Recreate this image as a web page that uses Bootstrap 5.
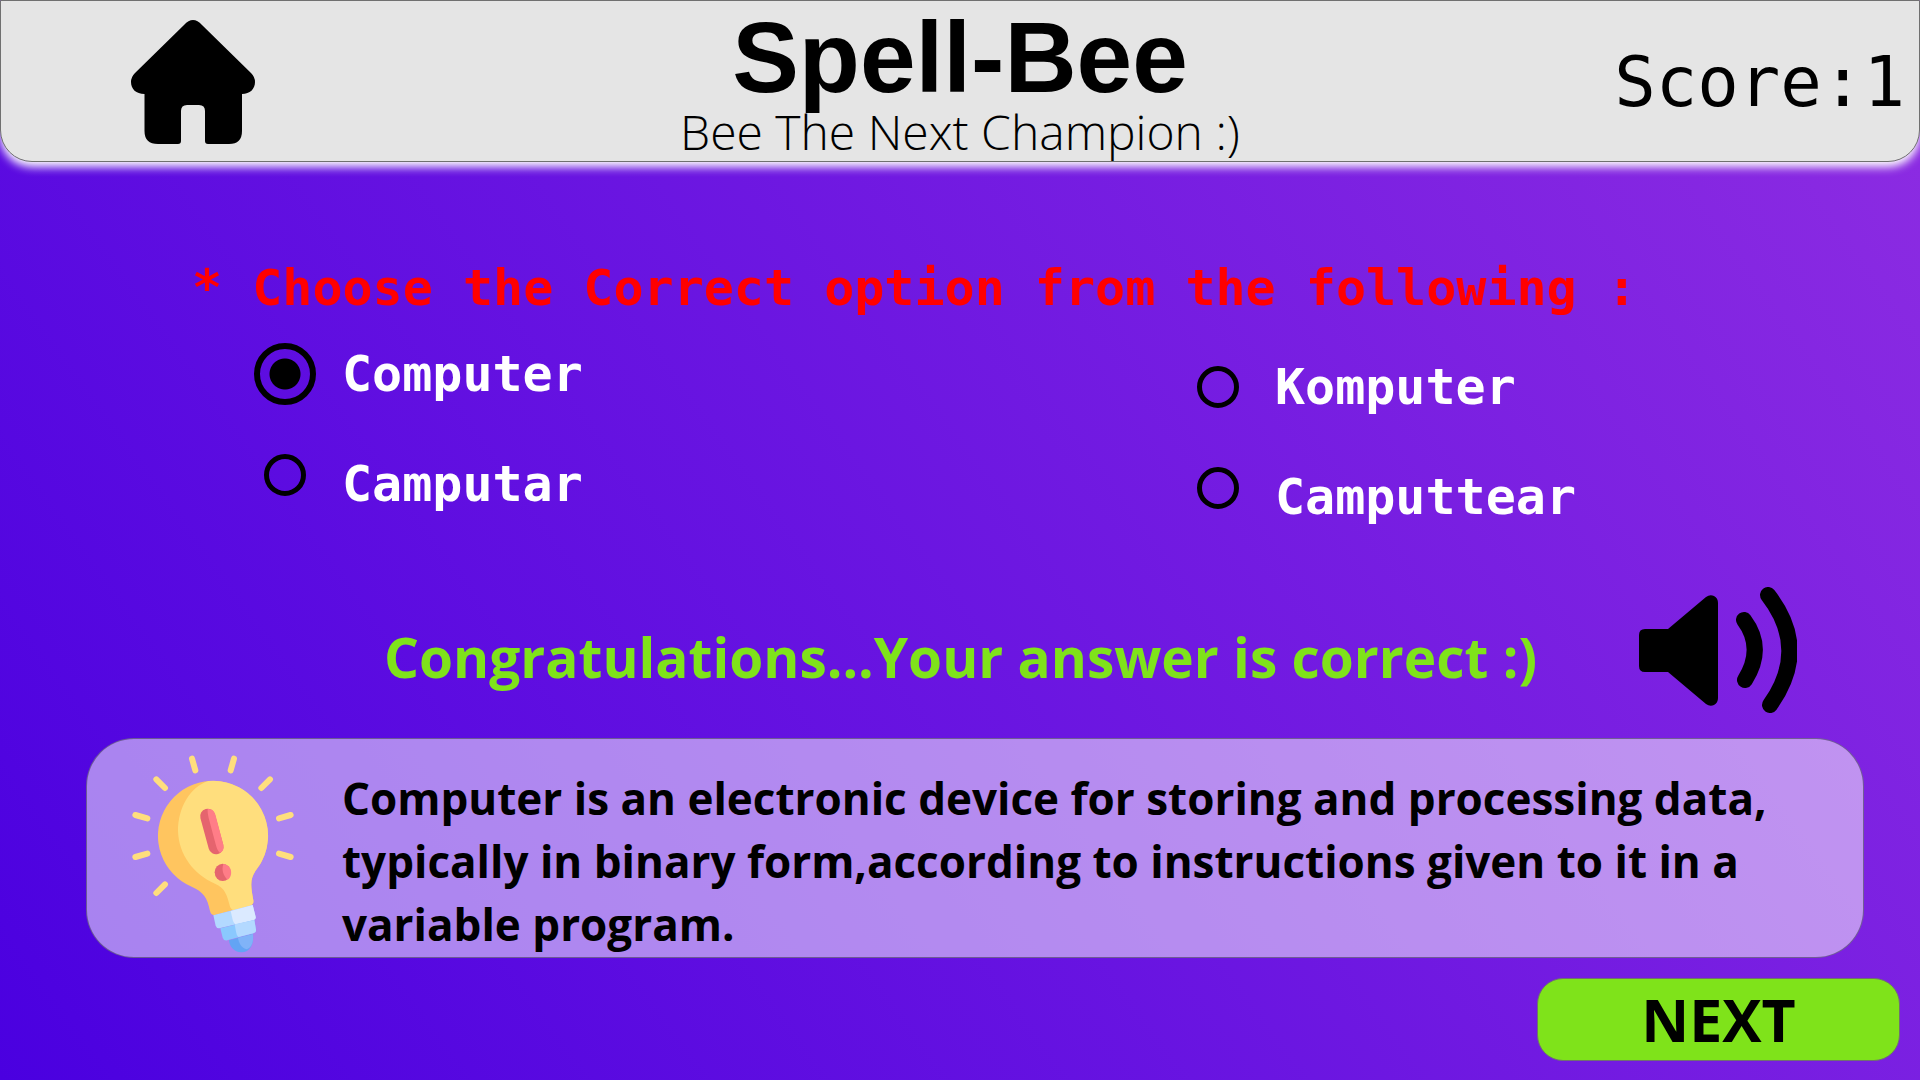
<!DOCTYPE html>
<html lang="en">
<head>
<meta charset="utf-8">
<meta name="viewport" content="width=device-width, initial-scale=1">
<title>Spell-Bee</title>
<link href="https://cdn.jsdelivr.net/npm/bootstrap@5.3.0/dist/css/bootstrap.min.css" rel="stylesheet">
<style>
  body { background: linear-gradient(54deg, #4a00e0, #8e2de2) no-repeat; color: #000; font-family: "Comic Sans MS", "Open Sans", sans-serif; }
  svg { display: block; flex: none; }
  .topbar { background: #e5e5e5; border: 1px solid #707070; border-radius: 0 0 32px 32px; box-shadow: 0 5px 10px #fff; padding: 6px 0 4px; }
  .side { width: 20%; }
  .brand { font: 700 100px/100px "Liberation Sans", Arial, sans-serif; }
  .tagline { font: 300 48px/50px "Open Sans", sans-serif; }
  .mono { font-family: "DejaVu Sans Mono", monospace; }
  .score { font-size: 69px; line-height: 80px; padding-right: 14px; white-space: nowrap; }
  .quiz { padding-top: 95px; }
  .question { font-size: 50px; line-height: 62px; color: #f00; padding-left: 10%; }
  .choices { padding-left: 254px; }
  .choice-set { flex: 0 0 56%; gap: 26px; }
  .choice-set + .choice-set { flex: 1 0 0; padding-top: 13px; }
  .dots { width: 62px; padding-top: 4px; }
  .dot-cell { height: 101px; }
  .dot { appearance: none; width: 42px; height: 42px; border: 5px solid #000; border-radius: 50%; margin: 0; }
  .dot:checked { width: 62px; height: 62px; border-width: 6px; background: radial-gradient(circle, #000 15px, transparent 16px); }
  .choice-name { font-size: 50px; line-height: 110px; font-weight: 700; color: #fff; }
  .result { margin: 35px 0 25px; padding: 0 123px 0 20%; }
  .result-text { font-size: 55px; line-height: 76px; font-weight: 700; color: #7fe31a; padding-top: 14px; }
  .fact { margin: 0 56px 0 86px; background: rgba(255, 255, 255, .51); border: 1px solid rgba(80, 70, 110, .7); border-radius: 48px; padding-right: 60px; }
  .fact-icon { width: 255px; padding: 14px 0 0 43px; }
  .fact-text { font-size: 44px; line-height: 63px; font-weight: 700; padding: 28px 0 1px; }
  .next { width: 363px; background: #7fe31a; border: 1px solid #707070; border-radius: 26px; font-size: 59px; line-height: 81px; font-weight: 700; padding: 0; margin: 20px 20px 19px; color: #000; }
  .next:hover { background: #72cf14; }
  .plain { background: none; border: 0; padding: 0; }
</style>
</head>
<body class="min-vh-100">
<header class="topbar d-flex align-items-center">
  <div class="side d-flex justify-content-center">
    <a href="#" aria-label="Home">
      <svg width="124" height="124" viewBox="0 0 124 124"><path d="M53 5Q62-5 71 5L120 53Q124 57 124 62C124 69 119 74 111 74V111Q111 124 98 124H77Q74 124 74 121V91Q74 85 68 85H56Q50 85 50 91V121Q50 124 47 124H27Q13.500 124 13.500 111V74C5 74 0 69 0 62Q0 57 4 53Z"/></svg>
    </a>
  </div>
  <div class="flex-fill text-center">
    <h1 class="brand m-0">Spell-Bee</h1>
    <p class="tagline m-0">Bee The Next Champion :)</p>
  </div>
  <div class="side score mono text-end">Score:1</div>
</header>

<main class="quiz">
  <h2 class="question mono fw-bold m-0">* Choose the Correct option from the following :</h2>

  <div class="choices d-flex" role="radiogroup" aria-label="Options">
    <div class="choice-set d-flex">
      <div class="dots">
        <div class="dot-cell d-flex align-items-center justify-content-center"><input class="dot" type="radio" name="word" id="w1" checked></div>
        <div class="dot-cell d-flex align-items-center justify-content-center"><input class="dot" type="radio" name="word" id="w2"></div>
      </div>
      <div class="d-flex flex-column">
        <label class="choice-name mono" for="w1">Computer</label>
        <label class="choice-name mono" for="w2">Camputar</label>
      </div>
    </div>
    <div class="choice-set d-flex">
      <div class="dots">
        <div class="dot-cell d-flex align-items-center justify-content-center"><input class="dot" type="radio" name="word" id="w3"></div>
        <div class="dot-cell d-flex align-items-center justify-content-center"><input class="dot" type="radio" name="word" id="w4"></div>
      </div>
      <div class="d-flex flex-column">
        <label class="choice-name mono" for="w3">Komputer</label>
        <label class="choice-name mono" for="w4">Camputtear</label>
      </div>
    </div>
  </div>

  <div class="result d-flex align-items-center justify-content-between">
    <p class="result-text m-0">Congratulations...Your answer is correct :)</p>
    <button class="plain" type="button" aria-label="Listen">
      <svg width="158" height="126" viewBox="0 0 158 126">
        <path d="M6 42H29L67 10Q71 7 75 9Q79 11 79 16V111Q79 116 75 118Q71 120 67 117L29 85H6Q0 85 0 79V48Q0 42 6 42Z"/>
        <path d="M105 33Q126 61 106 93M129 8Q171 62 131 118" fill="none" stroke="#000" stroke-width="16" stroke-linecap="round"/>
      </svg>
    </button>
  </div>

  <section class="fact d-flex align-items-start">
    <div class="fact-icon flex-shrink-0">
      <svg width="166" height="201" viewBox="90 36 498 603">
        <path d="M276 53L286 88M402 53L392 88M169 115L195 141M510 115L484 141M106 222L142 232M572 222L537 232M106 348L142 338M572 348L537 338M169 456L195 430" stroke="#ffde7d" stroke-width="18" stroke-linecap="round"/>
        <path fill="#ffc55f" d="M275 437A165 165 0 1 1 470 385C450 412 451 430 460 478Q462 490 450 494L345 522Q333 524 330 510C322 470 310 452 275 437Z"/>
        <path fill="#ffde7d" d="M325 120C270 138 234 200 234 270C236 340 280 400 345 428C375 440 382 465 388 490Q392 510 405 507L450 494Q462 490 460 478C451 430 450 412 470 385A165 165 0 0 0 325 120Z"/>
        <path stroke="#e5646e" stroke-width="45" stroke-linecap="round" d="M323 226L348 317"/>
        <path fill="#ff7d87" d="M323 204C338 203 344 212 347 224L370 311Q374 328 360 336C352 329 350 320 347 310L326 231Q322 212 323 204Z"/>
        <ellipse cx="368" cy="394" rx="24" ry="26" fill="#e5646e"/>
        <path fill="#ff7d87" d="M370 369C400 372 398 410 382 416C370 404 364 386 370 369Z"/>
        <path fill="#b3d9ff" d="M340 523L458 492L467 528Q468 535 460 538L358 562Q350 563 347 554Z"/>
        <path fill="#dbeaff" d="M392 510L458 492L467 528Q468 535 460 538L408 550Q402 549 398 536Z"/>
        <path fill="#8ac8fe" d="M361 562L463 537L468 566Q469 574 460 577L382 598Q371 600 368 590Z"/>
        <path fill="#b3d9ff" d="M404 550L463 537L468 566Q469 574 460 577L415 588Q410 584 408 572Z"/>
        <path fill="#63a4f4" d="M387 598L459 579C462 610 450 634 424 634C402 634 388 616 387 598Z"/>
        <path fill="#80b3f8" d="M414 590L459 579C461 605 455 618 441 625C424 620 416 606 414 590Z"/>
      </svg>
    </div>
    <p class="fact-text m-0">Computer is an electronic device for storing and processing data, typically in binary form,according to instructions given to it in a variable program.</p>
  </section>

  <div class="d-flex justify-content-end">
    <button class="next" type="button">NEXT</button>
  </div>
</main>
<script src="https://cdn.jsdelivr.net/npm/bootstrap@5.3.0/dist/js/bootstrap.bundle.min.js"></script>
</body>
</html>
